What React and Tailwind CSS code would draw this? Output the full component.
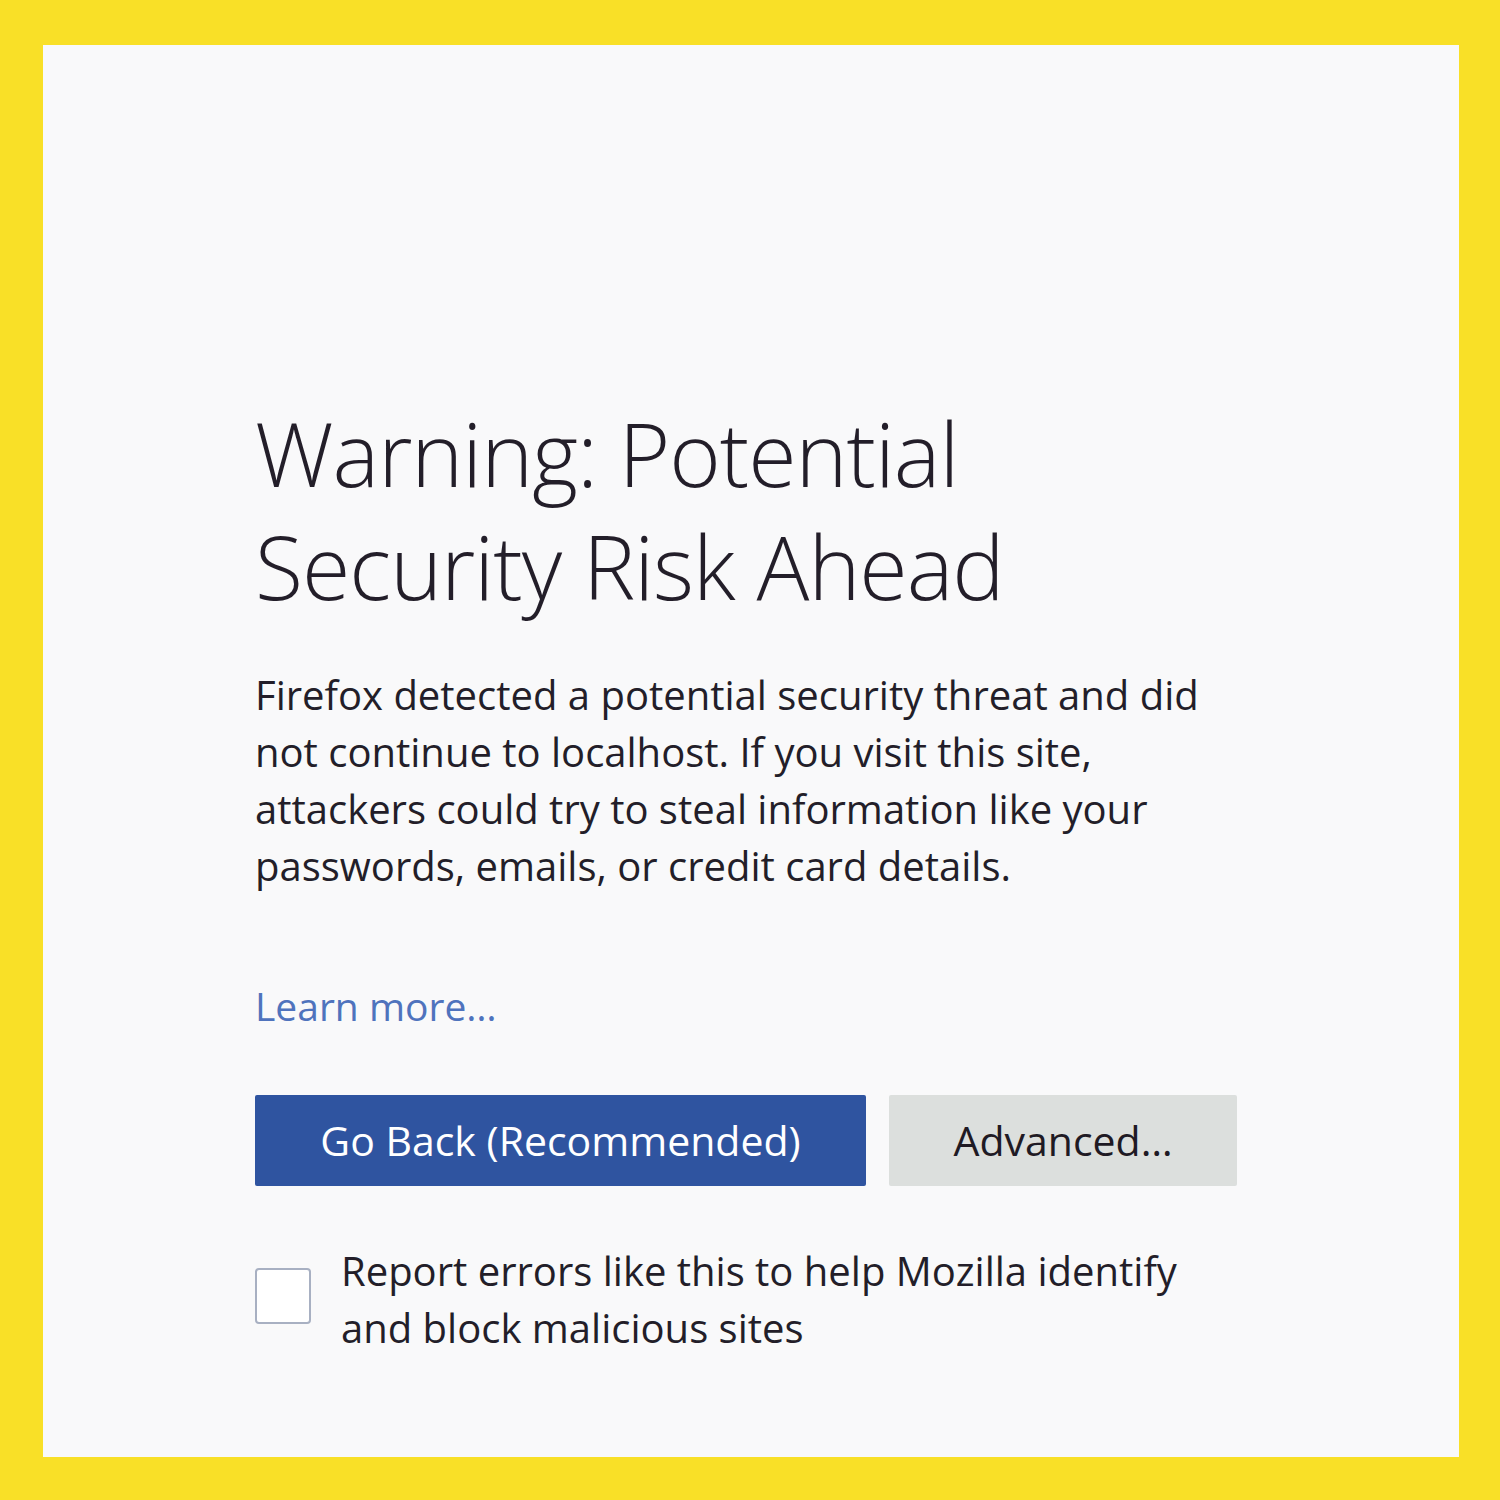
export default function App() {
  const font = { fontFamily: '"Open Sans", "Noto Sans", "Liberation Sans", sans-serif' };
  return (
    <div className="w-[1500px] h-[1500px] bg-[#f9e027] pt-[45px] pl-[43px] pr-[41px] pb-[43px]" style={font}>
      <div className="w-full h-full bg-[#f9f9fa] pl-[212px] pt-[352px] text-[#231e29]">
        <h1 className="text-[88px] leading-[113px] font-light tracking-[-1px] whitespace-nowrap">
          Warning: Potential
          <br />
          Security Risk Ahead
        </h1>
        <p className="mt-[43px] text-[40px] leading-[57px] whitespace-nowrap">
          Firefox detected a potential security threat and did
          <br />
          not continue to localhost. If you visit this site,
          <br />
          attackers could try to steal information like your
          <br />
          passwords, emails, or credit card details.
        </p>
        <div className="mt-[83px] text-[39px] leading-[57px] text-[#4f73bd]">Learn more…</div>
        <div className="mt-[61px] flex gap-[23px]">
          <button className="w-[611px] h-[91px] bg-[#2f54a0] text-white text-[41px] rounded-[2px]">
            Go Back (Recommended)
          </button>
          <button className="w-[348px] h-[91px] bg-[#dcdfdd] text-[#1f1a24] text-[41px] rounded-[2px]">
            Advanced…
          </button>
        </div>
        <div className="mt-[56px] flex items-start gap-[30px]">
          <div className="mt-[26px] w-[56px] h-[56px] border-2 border-[#a8b0c2] rounded-[4px] bg-white shrink-0" />
          <div className="text-[40px] leading-[57px] whitespace-nowrap">
            Report errors like this to help Mozilla identify
            <br />
            and block malicious sites
          </div>
        </div>
      </div>
    </div>
  );
}
